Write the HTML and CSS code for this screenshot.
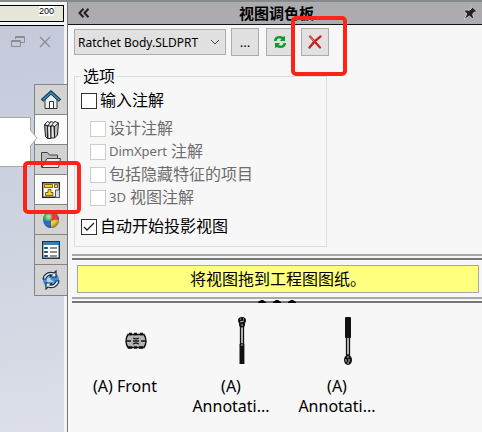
FILE: index.html
```html
<!DOCTYPE html>
<html lang="zh-CN">
<head>
  <meta charset="UTF-8">
  <meta name="viewport" content="width=device-width, initial-scale=1.0">
  <title>视图调色板</title>
  <link rel="stylesheet" href="styles.css">
</head>
<body>

<div class="app">
  <div class="viewport">
    <div class="ruler"><div class="scale"><span>200</span></div></div>
    <div class="window-buttons">
      <button class="plain" aria-label="还原">
        <svg width="14" height="12" viewBox="0 0 14 12" fill="none" stroke="#8b8d93"><path d="M4.500 3V.5h9v6H9.500M4.500 1.500h9M.5 4.500h9v6h-9zM.5 5.500h9"/></svg>
      </button>
      <button class="plain" aria-label="关闭">
        <svg width="12" height="12" viewBox="0 0 12 12" fill="none" stroke="#8b8d93" stroke-width="1.300"><path d="M1 1l10 10M11 1L1 11"/></svg>
      </button>
    </div>
    <div class="dock">
      <div class="flyout">
        <svg width="8" height="14" viewBox="0 0 8 14"><path d="M0 0h1l6 7-6 7H0z" fill="#fff"/><path d="M1 0l6 7-6 7" fill="none" stroke="#aaa"/></svg>
      </div>
      <nav class="tabs">
        <button class="tab" aria-label="资源">
          <svg width="20" height="20" viewBox="0 0 20 20"><path d="M4 9.500v9h12v-9L10 4z" fill="#eee" stroke="#333"/><path d="M8.500 18v-6.500h4V18" fill="#fff" stroke="#333"/><path d="M1 10.500l9-8 9 8" fill="none" stroke="#163c50" stroke-width="3.600"/><path d="M1.800 9.900L10 2.700l8.200 7.200" fill="none" stroke="#3b8db5" stroke-width="1.600"/></svg>
        </button>
        <button class="tab light" aria-label="设计库">
          <svg width="20" height="20" viewBox="0 0 20 20" stroke="#222" stroke-linejoin="round"><path d="M3.500 4.500l3 1.500v12.500l-2-2z" fill="#aaa"/><path d="M3.500 4.500L6.500 1.500l2 1 1.500-1 2.500 1 1.500-1 3.500 1.500-3 4-3-1-1.500 1z" fill="#f4f4f4"/><path d="M6.500 6h3l.5 12.500H7z" fill="#eee"/><path d="M10 6h3l.5 12H10z" fill="#e4e4e4"/><path d="M13.500 6.500l4-3.500-1 12-3 3z" fill="#bbb"/><path d="M6.500 6l3-3.500M10 6l3-3.500" fill="none"/></svg>
        </button>
        <button class="tab" aria-label="文件探索器">
          <svg width="22" height="20" viewBox="0 0 22 20" stroke="#444" stroke-linejoin="round"><path d="M1.500 17.500v-15h6l2 2.500h8v4" fill="#bdbdbd"/><path d="M2 17.500l5-9h13.500l-2 9z" fill="#eee"/></svg>
        </button>
        <button class="tab light marked" aria-label="视图调色板">
          <svg width="18" height="16" viewBox="0 0 18 16"><path d="M.7.7h16.600v14.600H.7z" fill="#fff" stroke="#222" stroke-width="1.400"/><path d="M2.500 2.500h8v3h-8zM12.500 2.500h3v3h-3zM6 7.500h3v3h2v3H3.500v-3H6z" fill="#ffcf28" stroke="#5b4300" stroke-width=".8"/><path d="M13.500 8h4v7.500h-4z" fill="#ddd" stroke="#555"/></svg>
        </button>
        <button class="tab" aria-label="外观">
          <svg width="18" height="18" viewBox="0 0 18 18"><defs><radialGradient id="shine" cx=".35" cy=".3" r=".75"><stop offset="0" stop-color="#fff" stop-opacity=".75"/><stop offset=".4" stop-color="#fff" stop-opacity="0"/><stop offset="1" stop-opacity=".45"/></radialGradient></defs><circle cx="9" cy="9" r="8" fill="#2459d6"/><path d="M9 1a8 8 0 0 0-8 8q4 2 8 1z" fill="#23a43c"/><path d="M9 1a8 8 0 0 1 8 8q-4-1-8 1z" fill="#e5322b"/><path d="M9 10q4-2 8-1a8 8 0 0 1-8 8z" fill="#ffd21f"/><circle cx="9" cy="9" r="8" fill="url(#shine)"/></svg>
        </button>
        <button class="tab" aria-label="自定义属性">
          <svg width="18" height="18" viewBox="0 0 18 18"><path d="M.7.7h16.600v16.600H.7z" fill="#fff" stroke="#1d3342" stroke-width="1.400"/><path d="M1 1h16v3H1z" fill="#2f83ad"/><path d="M2.500 6.500h3v1h-3zM2.500 10.500h3v1h-3zM2.500 14.500h3v1h-3z" fill="#72b5d6" stroke="#1d4b66"/><path d="M8 7h7M8 11h7M8 15h7" stroke="#222"/></svg>
        </button>
        <button class="tab" aria-label="刷新">
          <svg width="20" height="20" viewBox="0 0 20 20"><circle cx="10" cy="10" r="8" fill="#3f8edb"/><path d="M5 8q4-4 7-2l-3 3 4 3-2 3q-5 0-6-7z" fill="#a9d6f5"/><path d="M2 9a8 8 0 0 1 11-6l2-2v6H9l2-2a5 5 0 0 0-6 4zM18 11a8 8 0 0 1-11 6l-2 2v-6h6l-2 2a5 5 0 0 0 6-4z" fill="#e8eef3" stroke="#17314a" stroke-width="1.200"/></svg>
        </button>
      </nav>
    </div>
  </div>

  <main class="panel">
    <header class="panel-header">
      <button class="plain" aria-label="折叠">
        <svg width="12" height="10" viewBox="0 0 12 10" fill="none" stroke="#222" stroke-width="2"><path d="M5.500.8L1.500 5l4 4.200M10.500.8L6.500 5l4 4.200"/></svg>
      </button>
      <h1>视图调色板</h1>
      <button class="plain" aria-label="固定">
        <svg width="14" height="14" viewBox="0 0 14 14"><path d="M8.500.5l5 4.500-1.200 1.200H11L9.500 8.500l1 3-1.200 1L6.500 10 1 13.500 4 8 1.500 5l1-1.200L6 4.500 8.300 3z" fill="#222" stroke="#eee" stroke-width=".6"/></svg>
      </button>
    </header>

    <div class="toolbar">
      <select class="part" aria-label="零件">
        <option>Ratchet Body.SLDPRT</option>
      </select>
      <button class="tool">...</button>
      <button class="tool" aria-label="刷新视图">
        <svg width="14" height="14" viewBox="0 0 14 14" fill="#0b9b2c"><path d="M1 6q0-5 6-5 2 0 3 1l2-1v5H7l1.500-2Q4 2 3.500 6zM13 8q0 5-6 5-2 0-3-1l-2 1V8h5l-1.500 2Q10 12 10.500 8z"/></svg>
      </button>
      <button class="tool marked" aria-label="清除全部">
        <svg width="14" height="14" viewBox="0 0 14 14" fill="none" stroke-linecap="round"><path d="M2 1.500l10 11M12.500 1.500Q6 6 1.500 12.500" stroke="#c81f1f" stroke-width="2.200"/><path d="M2 1.500l4 4.500" stroke="#f08080"/></svg>
      </button>
    </div>

    <fieldset class="options">
      <legend>选项</legend>
      <label><input type="checkbox">输入注解</label>
      <div class="sub">
        <label><input type="checkbox" disabled>设计注解</label>
        <label><input type="checkbox" disabled><span class="latin">DimXpert</span>注解</label>
        <label><input type="checkbox" disabled>包括隐藏特征的项目</label>
        <label><input type="checkbox" disabled><span class="latin">3D</span>视图注解</label>
      </div>
      <label><input type="checkbox" checked>自动开始投影视图</label>
    </fieldset>

    <div class="splitter"></div>
    <p class="hint">将视图拖到工程图图纸。</p>
    <div class="splitter">
      <svg class="grip" width="38" height="4" viewBox="0 0 38 4"><path d="M0 4V3l3-2h2l3 2v1zM15 4V3l3-2h2l3 2v1zM30 4V3l3-2h2l3 2v1z"/></svg>
    </div>

    <div class="views">
      <figure class="view">
        <svg width="22" height="50" viewBox="0 0 22 50"><path d="M3 18.500h16q2 3 2 6.500t-2 6.500H3q-2-3-2-6.500t2-6.500z" fill="#b4b4b4" stroke="#111" stroke-width="1.400"/><path d="M4 18h3M9 18h3M15 18h3M3 31.500h4M9 31.500h3M14 31.500h4" stroke="#111" stroke-width="2.400"/><path d="M1 25h5M8 25h6M16 25h5M8 22l3 1 3-1M8 28l3-1 3 1" fill="none" stroke="#111" stroke-width="1.300"/></svg>
        <figcaption>(A) Front</figcaption>
      </figure>
      <figure class="view">
        <svg width="22" height="50" viewBox="0 0 22 50"><path d="M9.500 10h3v18h-3z" fill="#ccc" stroke="#111" stroke-width="1.300"/><path d="M8.500 28h4.500v20H8.500z" fill="#111"/><path d="M13.500 28v20" stroke="#999"/><ellipse cx="11" cy="4.500" rx="4" ry="3.500" fill="#111"/><circle cx="11" cy="8.500" r="3" fill="#111"/><path d="M9 3h1M12 3h1M9 6l4-1M10 9h2M10 29h2" stroke="#bbb"/></svg>
        <figcaption>(A) Annotati...</figcaption>
      </figure>
      <figure class="view">
        <svg width="22" height="50" viewBox="0 0 22 50"><path d="M9.500 21h3v18h-3z" fill="#ccc" stroke="#111" stroke-width="1.300"/><rect x="8" y="1" width="6" height="21" rx="1" fill="#111"/><ellipse cx="11" cy="44" rx="4" ry="5" fill="#111"/><path d="M10 41h2M9 43v3M12 43v3M10 47h2" stroke="#bbb"/></svg>
        <figcaption>(A) Annotati...</figcaption>
      </figure>
    </div>
  </main>
</div>

</body>
</html>
```
FILE: styles.css
```css
* {
  box-sizing: border-box;
}
body {
  margin: 0;
  background-color: #f7f7f7;
  color: #000;
  font-family: "Noto Sans", "Noto Sans CJK SC", sans-serif;
  font-size: 16px;
}
button {
  padding: 0;
  font: inherit;
}
svg {
  display: block;
}
.app {
  display: flex;
  min-height: 100vh;
  border-top: 2px solid #858b89;
}
.plain {
  border: 0;
  background: none;
}

/* drawing area on the left */
.viewport {
  flex: none;
  width: 67px;
  border-right: 3px solid #f2f2f2;
  background: linear-gradient(170deg, #c3c9d9, #d0d5e2 60%, #dcdfe8);
}
.ruler {
  height: 24px;
  padding: 3px 0 3px;
  border-bottom: 1px solid #000;
  background-color: #f7f7f7;
}
.scale {
  display: flex;
  justify-content: flex-end;
  align-items: flex-start;
  height: 17px;
  padding-right: 9px;
  border: 1px solid #000;
  border-left: 0;
  background-color: #e7e7d9;
}
.scale span {
  background-color: #fff;
  font-family: "Liberation Sans", sans-serif;
  font-size: 9px;
  line-height: 10px;
}
.window-buttons {
  display: flex;
  justify-content: flex-end;
  gap: 14px;
  height: 58px;
  padding: 10px 13px 0 0;
}
.window-buttons button {
  height: 12px;
}
.dock {
  display: flex;
  align-items: flex-start;
  margin-right: -3px;
}
.flyout {
  position: relative;
  flex: 1;
  height: 50px;
  margin: 33px 3px 0 0;
  border: 1px solid #aaa;
  border-left: 0;
  background-color: #fff;
}
.flyout svg {
  position: absolute;
  top: 13px;
  left: 100%;
  z-index: 1;
}
.tabs {
  display: flex;
  flex-direction: column;
  width: 33px;
  border: 1px solid #858585;
  border-right: 0;
}
.tab {
  display: grid;
  place-items: center;
  height: 30px;
  border: 0;
  border-bottom: 1px solid #858585;
  background-color: #d3d3d3;
}
.tab:last-child {
  border-bottom: 0;
}
.tab.light {
  background-color: #fafafa;
}

/* red highlight frames */
.marked {
  position: relative;
}
.marked::after {
  content: "";
  position: absolute;
  inset: -14px -14px -10px -12px;
  z-index: 2;
  border: 4px solid #ff2216;
  border-radius: 5px;
}
.tool.marked::after {
  inset: -13px -19px -21px -11px;
}

/* view palette */
.panel {
  flex: 1;
  min-width: 0;
  border-left: 1px solid #777;
}
.panel-header {
  display: flex;
  align-items: center;
  height: 23px;
  padding: 0 5px 0 10px;
  border-bottom: 1px solid #111;
  background-color: #acacb0;
}
.panel-header h1 {
  flex: 1;
  margin: 0;
  font-size: 15px;
  line-height: 20px;
  text-align: center;
}
.toolbar {
  display: flex;
  align-items: center;
  gap: 7px;
  padding: 3px 6px 0;
}
.part {
  appearance: none;
  width: 152px;
  height: 26px;
  margin-right: -2px;
  padding: 0 18px 0 3px;
  border: 1px solid #adadad;
  border-radius: 0;
  background: #e1e1e1 url("data:image/svg+xml,%3Csvg xmlns='http://www.w3.org/2000/svg' width='10' height='6'%3E%3Cpath d='M1 1l4 4 4-4' fill='none' stroke='%23444'/%3E%3C/svg%3E") no-repeat right 5px center;
  color: #000;
  font-family: "Noto Sans", sans-serif;
  font-size: 12px;
}
.tool {
  display: grid;
  place-items: center;
  width: 28px;
  height: 28px;
  border: 1px solid #adadad;
  background-color: #e1e1e1;
  font-size: 13px;
}
.options {
  width: 61%;
  margin: 9px 6px 0;
  padding: 2px 6px 8px;
  border: 1px solid #dcdcdc;
}
.options legend {
  padding: 0 2px;
  line-height: 22px;
}
.options label {
  display: flex;
  align-items: center;
  gap: 3px;
  line-height: 23px;
  white-space: nowrap;
}
.options input {
  appearance: none;
  flex: none;
  width: 16px;
  height: 16px;
  margin: 0;
  border: 1px solid #333;
  background-color: #fff;
}
.options input:checked {
  background: #fff url("data:image/svg+xml,%3Csvg xmlns='http://www.w3.org/2000/svg' width='12' height='10'%3E%3Cpath d='M1 5l3 3 7-7' fill='none' stroke='%23222' stroke-width='1.300'/%3E%3C/svg%3E") no-repeat center;
}
.options input:disabled {
  border-color: #ccc;
}
.sub {
  padding: 5px 0 6px 9px;
  color: #6d6d6d;
}
.latin {
  margin-right: 1px;
  font-size: 13px;
}
.splitter {
  height: 6px;
  margin: 7px 0 0 4px;
  border-top: 2px solid #a8a8a8;
  border-bottom: 2px solid #777;
}
.hint {
  margin: 5px 3px 0 9px;
  border: 1px solid #a6a6a6;
  background-color: #ffff80;
  line-height: 26px;
  text-align: center;
}
.hint + .splitter {
  margin-top: 4px;
}
.grip {
  margin: 0 auto;
}
.views {
  display: flex;
  padding: 13px 4px;
}
.view {
  display: flex;
  flex-direction: column;
  align-items: center;
  gap: 10px;
  width: 106px;
  margin: 0;
}
/* thumbnails sit right of the caption's middle */
.view svg {
  margin-left: 22px;
}
.view figcaption {
  width: 86px;
  font-size: 16px;
  line-height: 20px;
  text-align: center;
}
```
